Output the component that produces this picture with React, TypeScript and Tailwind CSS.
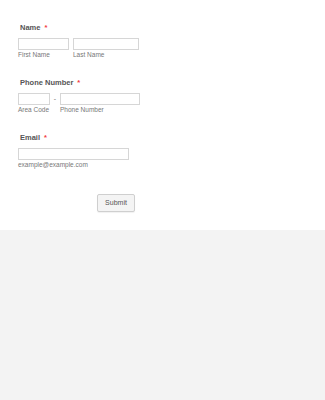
function Label({ text }: { text: string }) {
  return (
    <div className="pl-[2px] h-[9px] text-[7.5px] leading-[9px] font-bold text-[#555]">
      {text}
      <span className="ml-[4px] text-[#f23a3c]">*</span>
    </div>
  );
}

function Field({ w, sub }: { w: string; sub: string }) {
  return (
    <div className="flex flex-col">
      <div className={`${w} h-[12px] border border-[#d6d6d6] bg-white`}></div>
      <div className="mt-[1px] h-[8px] text-[6.5px] leading-[8px] text-[#777]">{sub}</div>
    </div>
  );
}

function App() {
  return (
    <div className="min-h-[400px] bg-[#f3f3f3]" style={{ fontFamily: '"Liberation Sans", Arial, sans-serif' }}>
      <div className="h-[230px] bg-white pt-[23px] pl-[18px] flex flex-col">
        <Label text="Name" />
        <div className="mt-[6px] flex gap-[4px]">
          <Field w="w-[51px]" sub="First Name" />
          <Field w="w-[66px]" sub="Last Name" />
        </div>

        <div className="mt-[19px]">
          <Label text="Phone Number" />
        </div>
        <div className="mt-[6px] flex">
          <Field w="w-[32px]" sub="Area Code" />
          <div className="w-[10px] h-[12px] text-center text-[7px] leading-[12px] text-[#777]">-</div>
          <Field w="w-[80px]" sub="Phone Number" />
        </div>

        <div className="mt-[19px]">
          <Label text="Email" />
        </div>
        <div className="mt-[6px] flex">
          <Field w="w-[111px]" sub="example@example.com" />
        </div>

        <div className="mt-[25px] ml-[79px] flex">
          <button className="w-[38px] h-[18px] border border-[#cfcfcf] rounded-[2px] bg-[#f4f4f4] shadow-[0_1px_1px_rgba(0,0,0,0.06)] text-[7px] leading-[16px] text-[#555]">
            Submit
          </button>
        </div>
      </div>
    </div>
  );
}

export default App;
